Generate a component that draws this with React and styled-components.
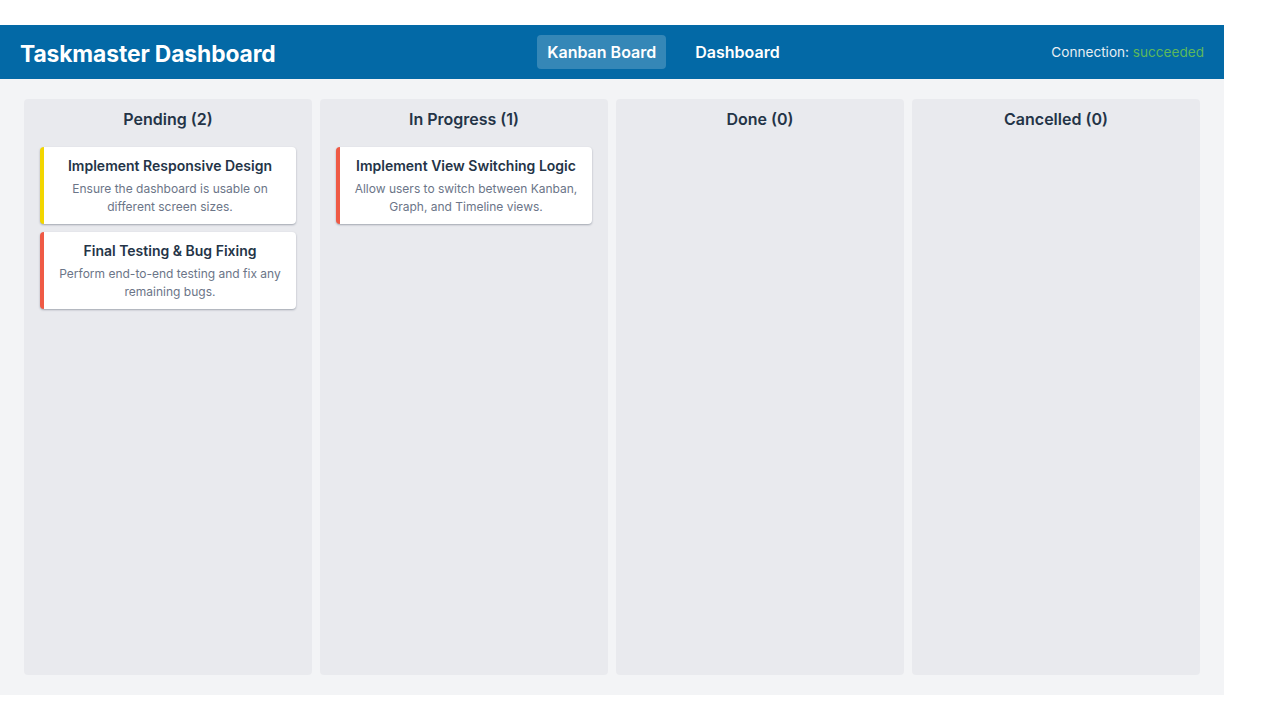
import React from "react";
import styled, { createGlobalStyle } from "styled-components";

const GlobalStyle = createGlobalStyle`
  body {
    margin: 0;
    background: #ffffff;
    font-family: Inter, "Noto Sans", sans-serif;
  }
`;

const Page = styled.div`
  width: 1224px;
  padding-top: 25px;
`;

const Header = styled.header`
  display: flex;
  align-items: center;
  justify-content: space-between;
  height: 54px;
  padding: 0 20px;
  background: #0369a6;
  color: #ffffff;
`;

const Title = styled.h1`
  margin: 0;
  padding-top: 2px;
  font-size: 22.8px;
  font-weight: 700;
  letter-spacing: -0.1px;
`;

const Nav = styled.nav`
  display: flex;
  gap: 19px;
`;

const NavButton = styled.button`
  border: none;
  border-radius: 4px;
  height: 34px;
  padding: 0 10px;
  font-family: inherit;
  font-size: 16px;
  font-weight: 600;
  color: #ffffff;
  background: ${(p) => (p.$active ? "rgba(255, 255, 255, 0.2)" : "transparent")};
  cursor: pointer;
`;

const Connection = styled.div`
  font-size: 13.6px;
  color: #e8eef3;
`;

const Status = styled.span`
  color: #5cb85c;
`;

const Board = styled.main`
  display: grid;
  grid-template-columns: repeat(4, 288px);
  gap: 8px;
  height: 576px;
  padding: 20px 24px;
  background: #f3f4f6;
`;

const Column = styled.section`
  display: flex;
  flex-direction: column;
  gap: 8px;
  padding: 8px 16px;
  background: #e9eaee;
  border-radius: 4px;
`;

const ColumnTitle = styled.h2`
  margin: 0 0 8px;
  text-align: center;
  font-size: 16px;
  font-weight: 600;
  line-height: 24px;
  color: #243447;
`;

const Card = styled.article`
  padding: 10px 12px 8px;
  background: #ffffff;
  border-left: 4px solid ${(p) => p.$accent};
  border-radius: 4px;
  box-shadow: 0 1px 2px rgba(30, 41, 59, 0.35);
  text-align: center;
`;

const CardTitle = styled.h3`
  margin: 0 0 6px;
  font-size: 14px;
  font-weight: 600;
  line-height: 17px;
  color: #243447;
`;

const CardText = styled.p`
  margin: 0;
  font-size: 12px;
  line-height: 18px;
  color: #6b7588;
`;

const columns = [
  {
    name: "Pending",
    tasks: [
      {
        title: "Implement Responsive Design",
        text: "Ensure the dashboard is usable on different screen sizes.",
        accent: "#f2d600",
      },
      {
        title: "Final Testing & Bug Fixing",
        text: "Perform end-to-end testing and fix any remaining bugs.",
        accent: "#ef5a45",
      },
    ],
  },
  {
    name: "In Progress",
    tasks: [
      {
        title: "Implement View Switching Logic",
        text: "Allow users to switch between Kanban, Graph, and Timeline views.",
        accent: "#ef5a45",
      },
    ],
  },
  { name: "Done", tasks: [] },
  { name: "Cancelled", tasks: [] },
];

const App = () => {
  return (
    <Page>
      <GlobalStyle />
      <Header>
        <Title>Taskmaster Dashboard</Title>
        <Nav>
          <NavButton $active>Kanban Board</NavButton>
          <NavButton>Dashboard</NavButton>
        </Nav>
        <Connection>
          Connection: <Status>succeeded</Status>
        </Connection>
      </Header>
      <Board>
        {columns.map((col) => (
          <Column key={col.name}>
            <ColumnTitle>
              {col.name} ({col.tasks.length})
            </ColumnTitle>
            {col.tasks.map((task) => (
              <Card key={task.title} $accent={task.accent}>
                <CardTitle>{task.title}</CardTitle>
                <CardText>{task.text}</CardText>
              </Card>
            ))}
          </Column>
        ))}
      </Board>
    </Page>
  );
};

export default App;
